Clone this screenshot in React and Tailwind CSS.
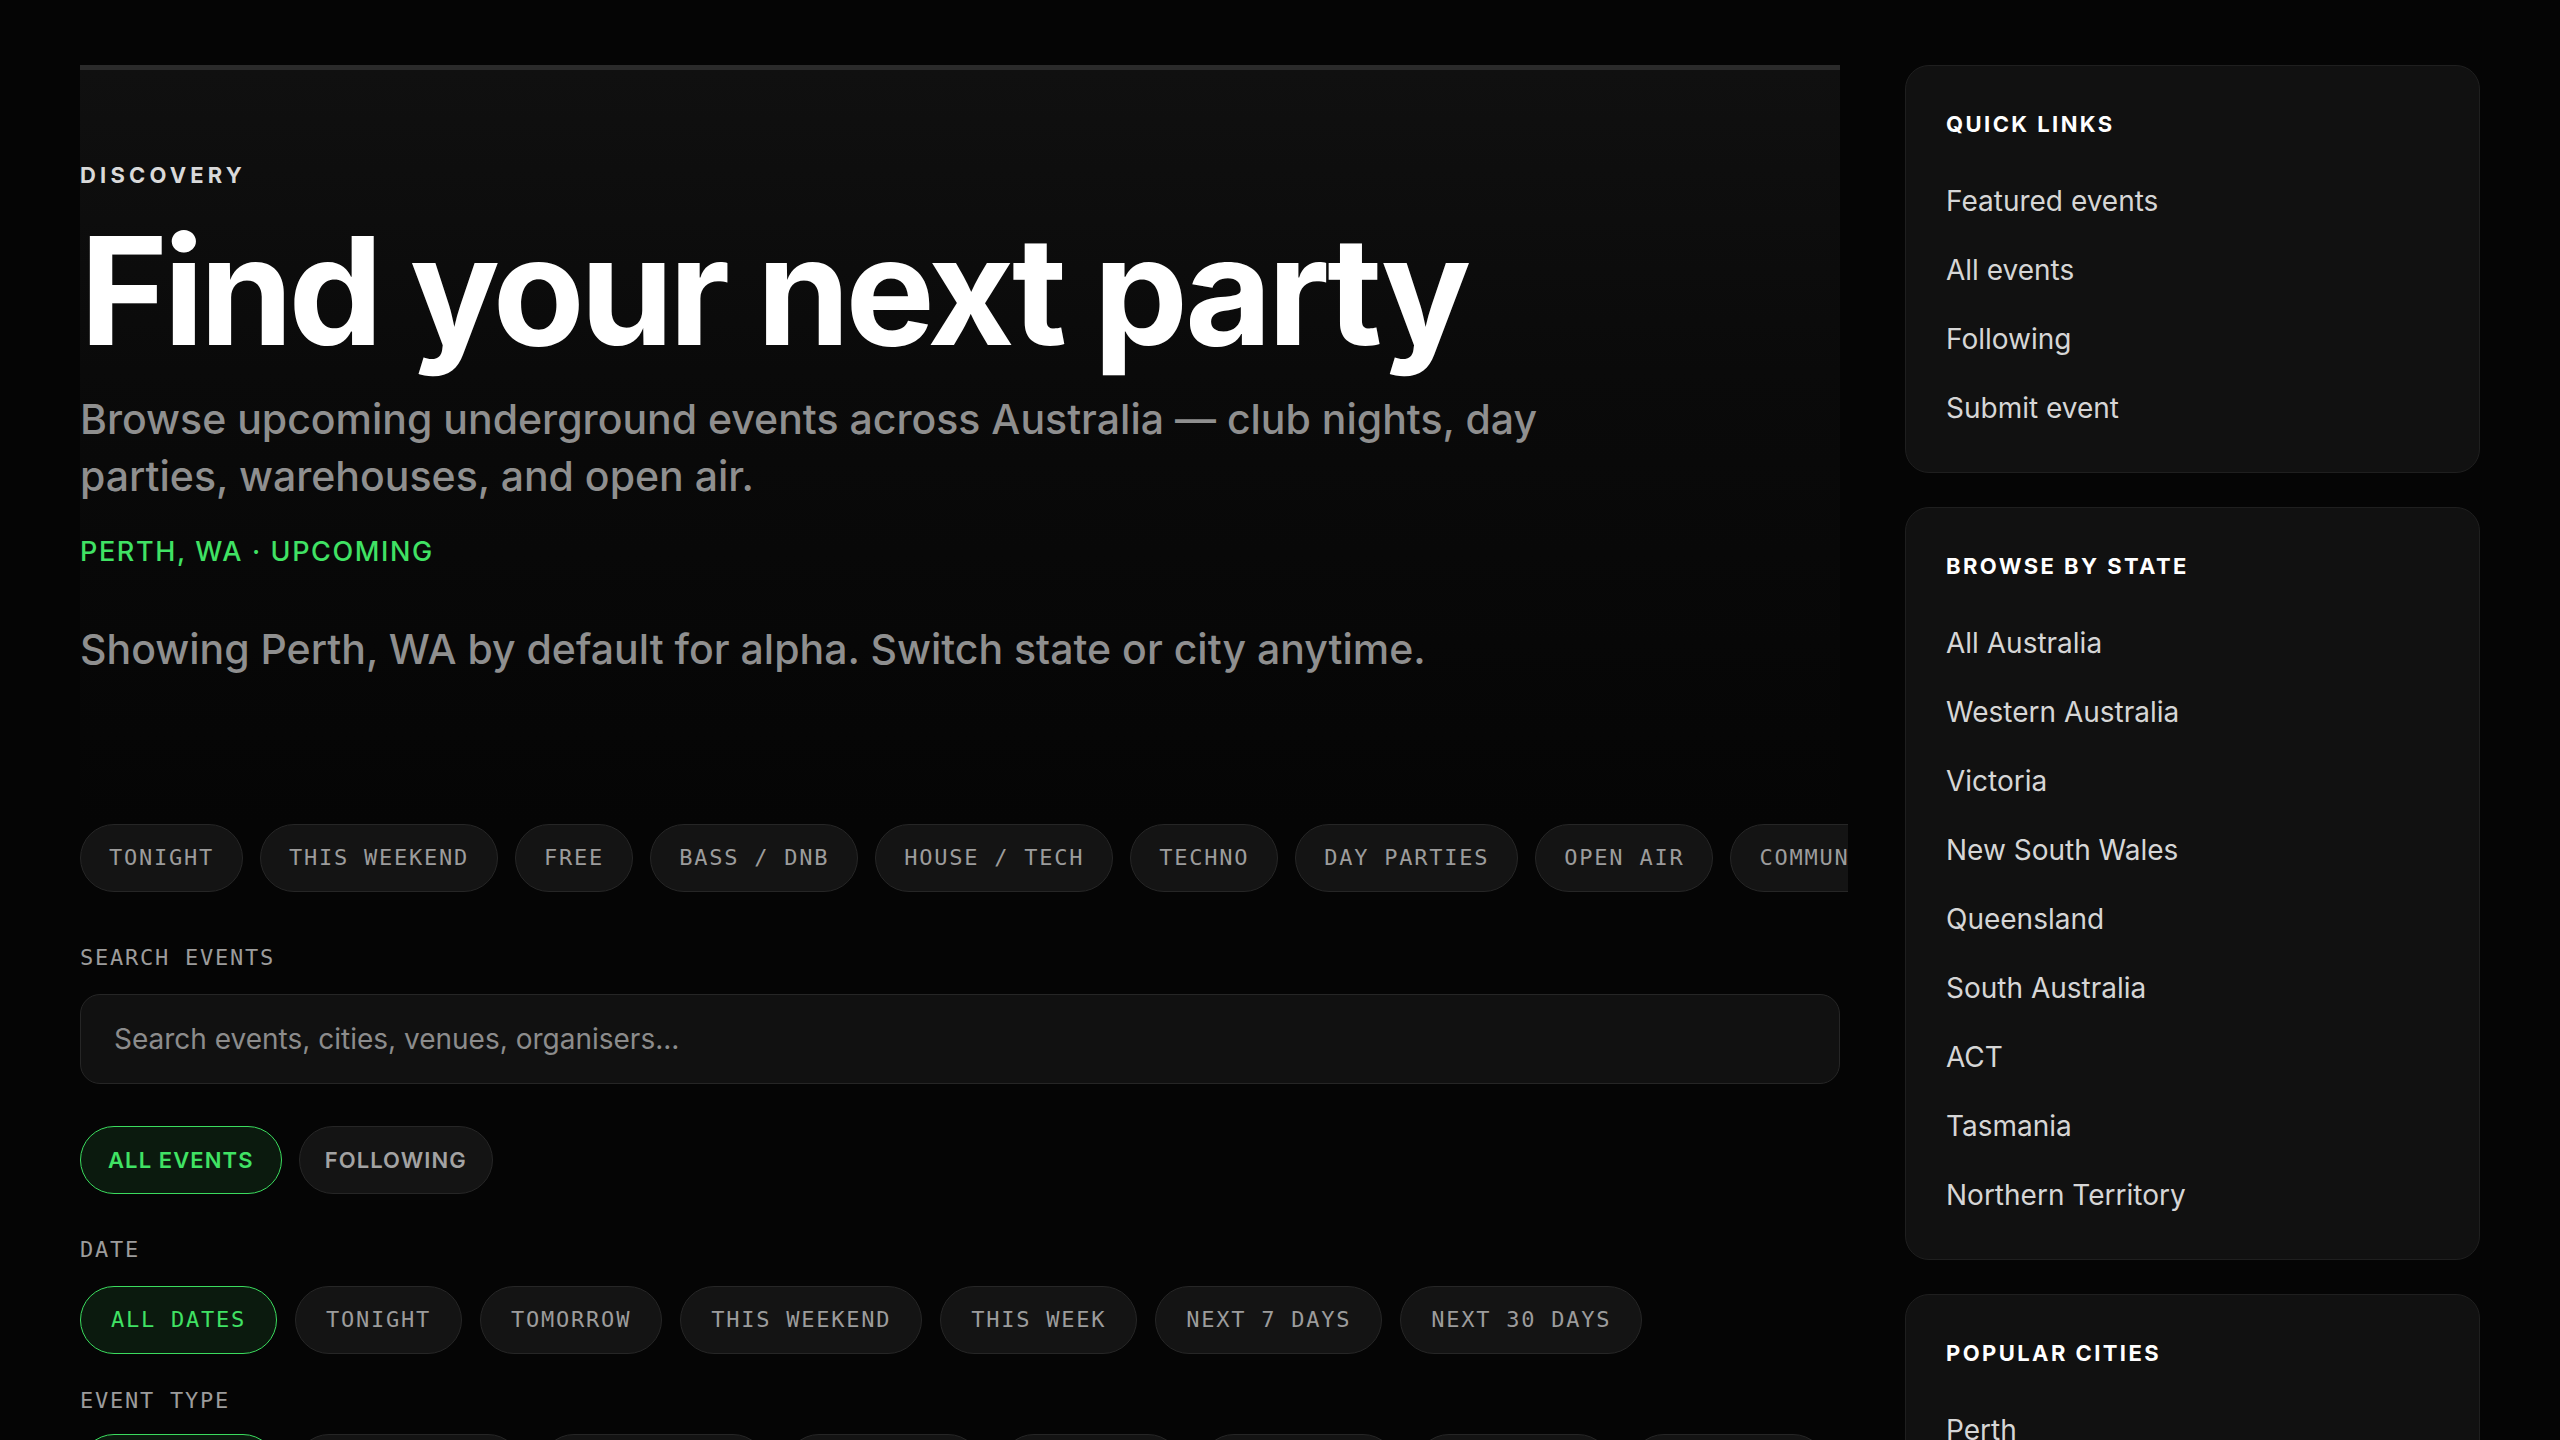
const QUICK_LINKS = ['Featured events', 'All events', 'Following', 'Submit event'];
const STATES = [
  'All Australia',
  'Western Australia',
  'Victoria',
  'New South Wales',
  'Queensland',
  'South Australia',
  'ACT',
  'Tasmania',
  'Northern Territory',
];
const CITIES = ['Perth', 'Melbourne', 'Sydney', 'Brisbane', 'Adelaide'];

const QUICK_CHIPS = [
  'Tonight',
  'This weekend',
  'Free',
  'Bass / DnB',
  'House / Tech',
  'Techno',
  'Day parties',
  'Open air',
  'Community',
  'Warehouse',
];
const DATES = ['All dates', 'Tonight', 'Tomorrow', 'This weekend', 'This week', 'Next 7 days', 'Next 30 days'];
const TYPES = ['All types', 'Club nights', 'Day parties', 'Warehouse', 'Open air', 'Festivals', 'Live sets', 'Workshops'];

const mono = "font-['DejaVu_Sans_Mono','Liberation_Mono',monospace]";

function Chip({ label, active, wide }) {
  return (
    <button
      className={
        'shrink-0 rounded-full border py-[17px] text-[22px] leading-[32px] uppercase tracking-[0.08em] whitespace-nowrap ' +
        mono +
        (wide ? ' px-[30px]' : ' px-[28px]') +
        (active
          ? ' border-[#3bdc5e] bg-[#0b1a0e] text-[#40e264]'
          : ' border-[#262626] bg-[#141414] text-[#9c9c9c]')
      }
    >
      {label}
    </button>
  );
}

function SideCard({ title, items }) {
  return (
    <div className="rounded-3xl border border-[#1f1f1f] bg-[#111111] px-10 pt-[42px] pb-[44px]">
      <h3 className="text-[22px] leading-8 font-bold uppercase tracking-[0.11em] text-white">{title}</h3>
      <ul className="mt-[41px] flex flex-col gap-[29px]">
        {items.map((it) => (
          <li key={it} className="text-[28px] leading-10 text-[#d6d6d6]">
            {it}
          </li>
        ))}
      </ul>
    </div>
  );
}

export default function App() {
  return (
    <div className="min-h-screen bg-[#050505] font-['Inter','Noto_Sans',sans-serif] text-white">
      <div className="grid grid-cols-[1760px_575px] gap-[65px] px-[80px] pt-[65px]">
        {/* main column */}
        <main className="min-w-0">
          <section className="border-t-[5px] border-[#2b2b2b] bg-gradient-to-b from-[#101010] via-[#0a0a0a] via-40% to-transparent pt-[91px] pb-[146px]">
            <p className="text-[22px] leading-7 font-bold uppercase tracking-[0.19em] text-[#d9d9d9]">Discovery</p>
            <h1 className="mt-[27px] text-[150px] leading-none font-bold tracking-[-0.03em] text-white">
              Find your next party
            </h1>
            <p className="mt-[25px] max-w-[1580px] text-[41px] leading-[57px] font-medium text-[#8f8f8f]">
              Browse upcoming underground events across Australia — club nights, day parties, warehouses, and open air.
            </p>
            <p className="mt-[29px] text-[27px] leading-9 font-medium uppercase tracking-[0.06em] text-[#40e264]">
              Perth, WA · Upcoming
            </p>
            <p className="mt-[51px] text-[41px] leading-[57px] font-medium text-[#8f8f8f]">
              Showing Perth, WA by default for alpha. Switch state or city anytime.
            </p>
          </section>

          {/* quick filter chips */}
          <div className="-mr-2 flex gap-[17px] overflow-hidden">
            {QUICK_CHIPS.map((c) => (
              <Chip key={c} label={c} />
            ))}
          </div>

          <p className={'mt-[50px] text-[22px] leading-8 uppercase tracking-[0.08em] text-[#9c9c9c] ' + mono}>
            Search events
          </p>
          <div className="mt-5 flex h-[90px] items-center rounded-[20px] border border-[#262626] bg-[#111111] px-[33px]">
            <input
              className="w-full bg-transparent text-[28px] text-white outline-none placeholder:text-[#8c8c8c]"
              placeholder="Search events, cities, venues, organisers..."
            />
          </div>

          <div className="mt-[42px] flex gap-[17px]">
            <button className="rounded-full border border-[#3bdc5e] bg-[#0b1a0e] px-[27px] py-[17px] text-[22px] leading-8 font-semibold uppercase tracking-[0.05em] text-[#40e264]">
              All events
            </button>
            <button className="rounded-full border border-[#262626] bg-[#141414] px-[25px] py-[17px] text-[22px] leading-8 font-semibold uppercase tracking-[0.05em] text-[#a3a3a3]">
              Following
            </button>
          </div>

          <p className={'mt-10 text-[22px] leading-8 uppercase tracking-[0.08em] text-[#9c9c9c] ' + mono}>Date</p>
          <div className="mt-5 flex flex-wrap gap-[18px]">
            {DATES.map((d, i) => (
              <Chip key={d} label={d} active={i === 0} wide />
            ))}
          </div>

          <p className={'mt-[31px] text-[22px] leading-8 uppercase tracking-[0.08em] text-[#9c9c9c] ' + mono}>
            Event type
          </p>
          <div className="mt-[17px] flex flex-wrap gap-[18px] pb-20">
            {TYPES.map((t, i) => (
              <Chip key={t} label={t} active={i === 0} wide />
            ))}
          </div>
        </main>

        {/* sidebar */}
        <aside className="flex flex-col gap-[34px]">
          <SideCard title="Quick links" items={QUICK_LINKS} />
          <SideCard title="Browse by state" items={STATES} />
          <SideCard title="Popular cities" items={CITIES} />
        </aside>
      </div>
    </div>
  );
}
